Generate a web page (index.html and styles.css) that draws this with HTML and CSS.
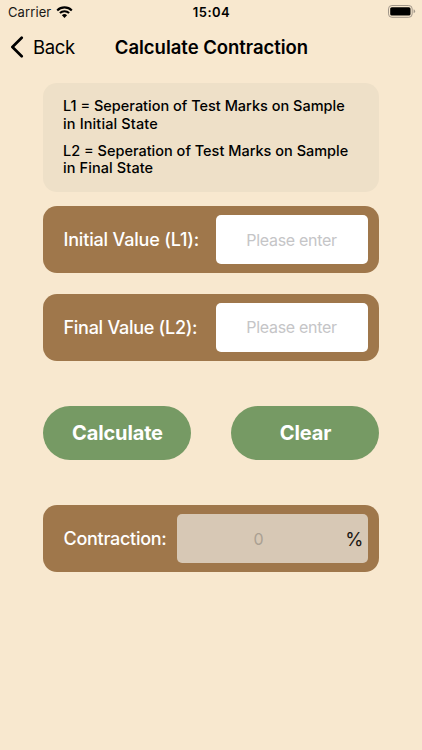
FILE: index.html
```html
<!DOCTYPE html>
<html lang="en">
<head>
<meta charset="utf-8">
<title>Calculate Contraction</title>
<link rel="stylesheet" href="styles.css">
</head>
<body>
<div class="status">
  <div class="carrier"><span>Carrier</span>
    <svg class="wifi" viewBox="0 0 17 12" width="17" height="12"><path d="M1.2 4.4a10.4 10.4 0 0 1 14.6 0M3.9 7.1a6.6 6.6 0 0 1 9.2 0" fill="none" stroke="#000" stroke-width="2.1"/><path d="M5.9 9.2a3.8 3.8 0 0 1 5.2 0L8.5 11.9z"/></svg>
  </div>
  <span class="time">15:04</span>
  <svg class="battery" viewBox="0 0 28 13" width="28" height="13"><rect x=".5" y=".5" width="23.7" height="11.8" rx="3.4" fill="none" stroke="#a2978a"/><rect x="2.2" y="2.2" width="20.3" height="8.4" rx="1.6"/><path d="M25.6 4.3q1.5.7 1.5 2t-1.5 2z" fill="#a2978a"/></svg>
</div>
<header class="nav">
  <div class="back"><svg viewBox="0 0 14 22" width="14" height="22"><path d="M11.7 1.8 2.4 11l9.3 9.2" fill="none" stroke="#000" stroke-width="2.7" stroke-linecap="round" stroke-linejoin="round"/></svg><span class="back-label">Back</span></div>
  <h1>Calculate Contraction</h1>
</header>
<main>
  <section class="info">
    <p>L1 = Seperation of Test Marks on Sample<br><span class="initial-state">in Initial State</span></p>
    <p>L2 = Seperation of Test Marks on Sample<br><span class="final-state">in Final State</span></p>
  </section>
  <div class="row"><label class="initial">Initial Value (L1):</label><div class="field"><span>Please enter</span></div></div>
  <div class="row second"><label class="final">Final Value (L2):</label><div class="field"><span>Please enter</span></div></div>
  <div class="actions"><button class="calc">Calculate</button><button class="clear">Clear</button></div>
  <div class="row last"><label class="contraction">Contraction:</label><div class="field result"><span class="zero">0</span><span class="percent">%</span></div></div>
</main>
</body>
</html>
```
FILE: styles.css
```css
* { box-sizing: border-box; }
body { margin: 0; height: 750px; overflow: hidden; background: #f8e8cf; color: #000; font-family: Inter, "Liberation Sans", sans-serif; }
.status { height: 24px; display: grid; grid-template-columns: 1fr auto 1fr; align-items: center; padding: 0 6px 0 8px; font-size: 13px; }
.carrier { display: flex; align-items: center; gap: 5px; color: #1a1815; letter-spacing: .1px; }
.time { font-weight: 600; letter-spacing: .45px; margin-right: 1px; }
.battery { justify-self: end; margin-top: -1px; }
.nav { height: 46px; display: grid; grid-template-columns: 1fr auto 1fr; align-items: center; padding: 0 9px 0 10px; }
.back { display: flex; align-items: center; gap: 9px; font-size: 18.5px; letter-spacing: -.35px; }
h1 { margin: 0; font-size: 18.5px; font-weight: 600; letter-spacing: -.03px; }
main { padding: 13px 43px 0; }
.info { height: 109px; border-radius: 14px; background: #eee0c8; padding: 14px 20px; font-size: 14.5px; line-height: 17.5px; font-weight: 500; white-space: nowrap; }
.info p { margin: 0 0 9.5px; }
.initial-state { letter-spacing: .13px; }
.final-state { letter-spacing: .1px; }
.row { height: 67.4px; margin-top: 14px; border-radius: 14px; background: #9f774b; padding: 0 11.5px 0 20.5px; display: flex; align-items: center; justify-content: space-between; color: #fff; font-size: 18px; font-weight: 500; white-space: nowrap; }
.second { margin-top: 20.2px; }
.initial { letter-spacing: -.18px; }
.final { letter-spacing: -.27px; }
.contraction { letter-spacing: -.28px; }
.field { width: 152px; height: 49px; background: #fff; border-radius: 5px; display: flex; align-items: center; justify-content: center; color: #c5c5c7; font-size: 16px; font-weight: 400; letter-spacing: -.3px; }
.actions { display: flex; justify-content: space-between; margin: 45px 0; }
button { width: 148px; height: 54px; border: 0; border-radius: 27px; background: #769a64; color: #fff; font: 700 20px Inter, sans-serif; letter-spacing: -.15px; padding: 0 0 0 1px; }
.result { width: 191px; background: #d7c8b5; display: grid; grid-template-columns: 1fr auto; padding: 0 4px 0 0; }
.zero { justify-self: center; margin-right: 5px; color: #aaa092; }
.percent { color: #1a1612; font-size: 18.5px; letter-spacing: 0; }
```
